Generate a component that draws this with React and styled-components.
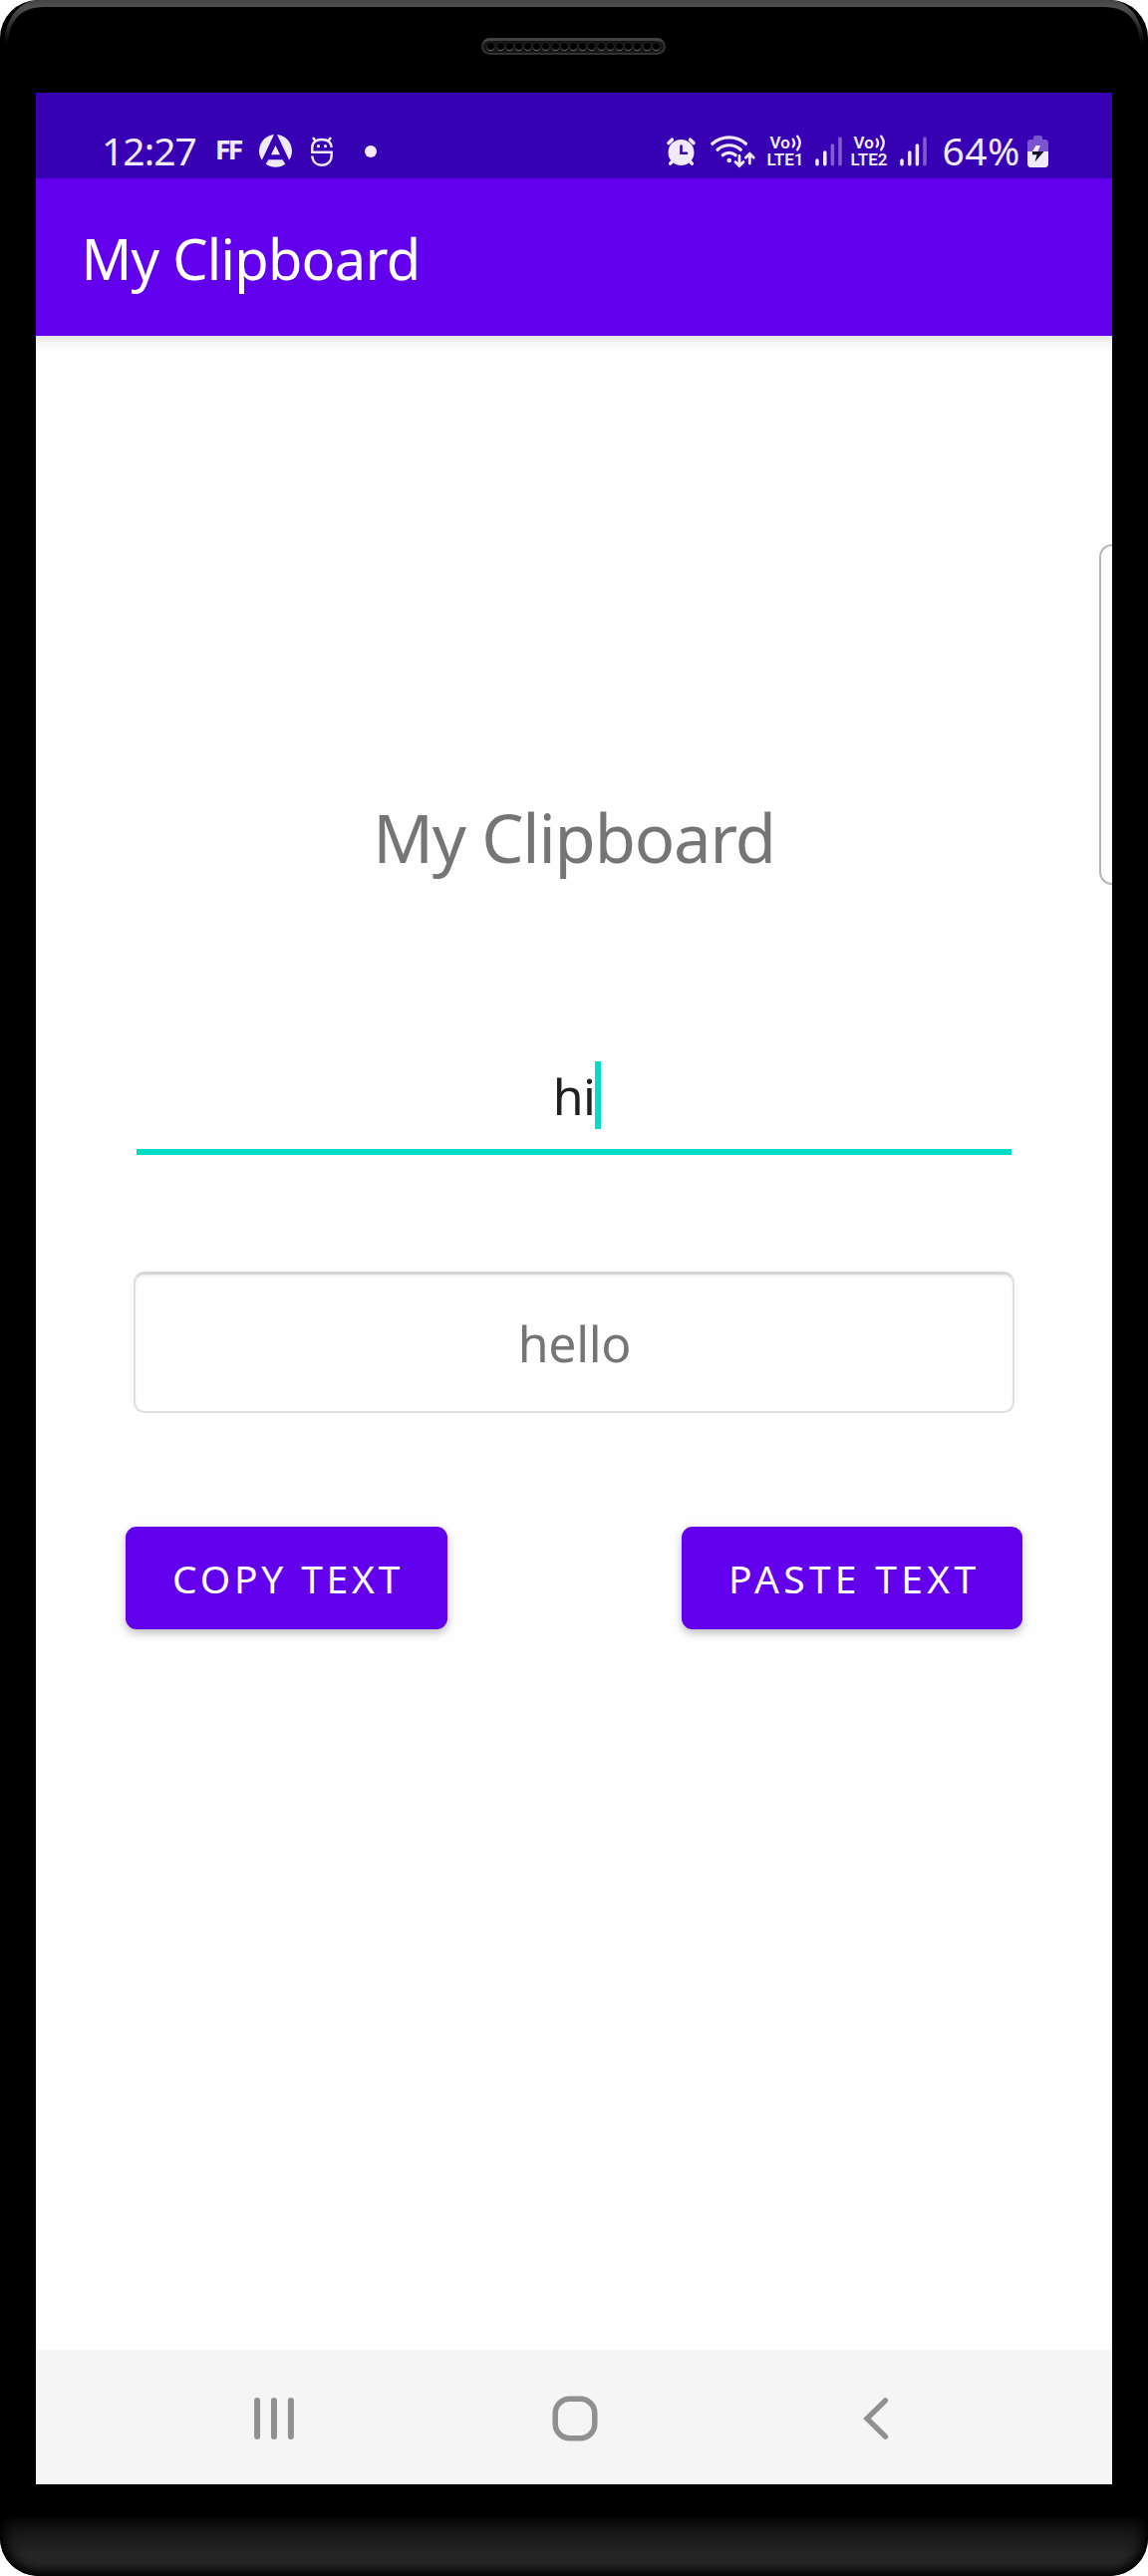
import React from "react";
import styled, { createGlobalStyle } from "styled-components";

const GlobalStyle = createGlobalStyle`
  * { box-sizing: border-box; }
  body { margin: 0; background: #fff; }
`;

const Phone = styled.div`
  position: relative;
  width: 1152px;
  height: 2585px;
  display: flex;
  flex-direction: column;
  align-items: center;
  overflow: hidden;
  border-radius: 38px;
  background: #000;
  font-family: "Noto Sans", "Open Sans", sans-serif;
`;

const TopBezel = styled.div`
  width: 100%;
  height: 93px;
  flex: none;
  display: flex;
  justify-content: center;
  padding: 38px 1px 0 0;
`;

const TopRim = styled.svg`
  position: absolute;
  top: 0;
  left: 0;
  width: 1152px;
  height: 46px;
`;

const Speaker = styled.div`
  width: 185px;
  height: 17px;
  display: flex;
  align-items: center;
  justify-content: center;
  gap: 2.2px;
  border-radius: 9px;
  border: 2px solid #333;
  border-top: 3px solid #424242;
  background: #151515;
`;

const Hole = styled.span`
  width: 7px;
  height: 8px;
  flex: none;
  border-radius: 50%;
  background: #000;
  border-bottom: 1px solid #666;
  box-shadow: 0 0 0 0.5px #333;
`;

const Screen = styled.div`
  position: relative;
  width: 1080px;
  height: 2400px;
  flex: none;
  display: flex;
  flex-direction: column;
  background: #fefefe;
  overflow: hidden;
`;

const StatusBar = styled.div`
  height: 86px;
  flex: none;
  display: flex;
  align-items: center;
  justify-content: space-between;
  padding: 31px 64px 0 66px;
  background: #3700b3;
  color: #f0eafa;
`;

const StatusGroup = styled.div`
  display: flex;
  align-items: center;
`;

const StatusText = styled.span`
  margin-left: ${(p) => p.$gap || 0}px;
  padding-bottom: 1px;
  font-size: 39px;
  line-height: 50px;
  letter-spacing: ${(p) => p.$track || 0}px;
`;

const Glyph = styled.svg`
  display: block;
  flex: none;
  overflow: visible;
  margin-left: ${(p) => p.$gap}px;
`;

const GameBadge = styled.span`
  margin-left: ${(p) => p.$gap}px;
  width: 26px;
  font: 900 25px/30px Roboto, sans-serif;
  letter-spacing: -0.8px;
`;

const Dot = styled.span`
  width: 12px;
  height: 12px;
  margin-left: ${(p) => p.$gap}px;
  border-radius: 50%;
  background: currentColor;
`;

const Carrier = styled.span`
  display: flex;
  flex-direction: column;
  width: 40px;
  margin-left: ${(p) => p.$gap}px;
  font: 600 17px/17px Roboto, sans-serif;
`;

const VoRow = styled.span`
  display: flex;
  align-items: center;
  padding-left: 3px;
`;

const AppBar = styled.header`
  height: 158px;
  flex: none;
  display: flex;
  align-items: center;
  padding: 1px 0 0 45.5px;
  background: #6200ee;
  color: #fff;
  font-size: 56px;
  letter-spacing: -0.75px;
`;

const Content = styled.main`
  flex: 1;
  display: flex;
  flex-direction: column;
  align-items: center;
  background: linear-gradient(#e4e4e4, #f6f6f6 7px, #fefefe 15px);
`;

const Heading = styled.h1`
  margin: 463px 0 0;
  font-size: 67px;
  line-height: 80px;
  font-weight: 400;
  letter-spacing: -1.15px;
  color: #757575;
`;

const TextField = styled.div`
  width: 878px;
  height: 94px;
  margin-top: 185px;
  display: flex;
  justify-content: center;
  border-bottom: 6px solid #05dcc8;
  font-size: 50px;
  line-height: 70px;
  letter-spacing: -0.6px;
  color: #212121;
`;

const Caret = styled.span`
  width: 6px;
  height: 68px;
  margin-right: -6px;
  background: #05dcc8;
`;

const ClipBox = styled.div`
  width: 884px;
  height: 142px;
  margin-top: 117px;
  display: flex;
  align-items: center;
  justify-content: center;
  padding-left: 1px;
  border: 2px solid #e0e0e0;
  border-top: 3px solid #d6d6d6;
  border-radius: 11px;
  box-shadow: inset 0 2px 2px #f1f1f1;
  font-size: 50px;
  letter-spacing: -0.3px;
  color: #757575;
`;

const Actions = styled.div`
  width: 900px;
  margin-top: 114px;
  display: flex;
  justify-content: space-between;
`;

const Button = styled.button`
  width: ${(p) => p.$width}px;
  height: 103px;
  padding: 0 0 0 47px;
  border: 0;
  border-radius: 11px;
  background: #6200ee;
  box-shadow: 0 4px 8px rgba(0, 0, 0, 0.25);
  color: #fff;
  font: 400 39px "Noto Sans", sans-serif;
  letter-spacing: ${(p) => p.$track}px;
  text-align: left;
  white-space: nowrap;
`;

/* Edge panel handle that overlaps the right side of the screen. */
const EdgeHandle = styled.div`
  position: absolute;
  right: 0;
  top: 453px;
  width: 13px;
  height: 342px;
  border: 2.5px solid #b4b6b5;
  border-right: 0;
  border-radius: 13px 0 0 13px;
`;

const NavBar = styled.nav`
  height: 135px;
  flex: none;
  display: flex;
  align-items: center;
  padding: 3px 0 0 219px;
  background: #f5f5f5;
  color: #909090;
`;

const Chin = styled.div`
  width: 100%;
  height: 58px;
  margin-top: 34px;
  border-radius: 0 0 38px 38px;
  background: linear-gradient(#0b0b0b, #171717 28%, #262626 62%, #252525 100%);
  box-shadow: inset 0 -7px 12px -3px #000, inset 9px 0 14px -5px #000,
    inset -9px 0 14px -5px #000;
`;

function AlarmIcon() {
  return (
    <Glyph $gap={0} width="29" height="28" viewBox="0 0 29 28" fill="none" stroke="currentColor" strokeLinecap="round">
      <circle cx="14.5" cy="15" r="13" fill="currentColor" stroke="none" />
      <path d="M2 5.6 5.4 2.2M27 5.6 23.6 2.2" strokeWidth="3.6" />
      <path d="M6.5 23 3.6 26.2M22.5 23l2.9 3.2" strokeWidth="3.4" />
      <path d="M14.5 8.5V15.8H20" stroke="#3700b3" strokeWidth="2.6" />
    </Glyph>
  );
}

function WifiIcon() {
  return (
    <Glyph $gap={15} width="45" height="34" viewBox="0 0 45 34" fill="none" stroke="currentColor" strokeWidth="3.2" strokeLinecap="round">
      <path d="M1.8 9.3A25.5 25.5 0 0 1 35.5 9.3" />
      <path d="M7 15.2A17.5 17.5 0 0 1 30.3 15.2" />
      <path d="M12.2 20.8A9.7 9.7 0 0 1 25.2 20.8" />
      <circle cx="18.8" cy="26" r="2.3" fill="currentColor" stroke="none" />
      <path d="M29 21.5V31.2M25 27.6 29 31.6 33 27.6M39.3 29V19.5M35.3 23.2 39.3 19.2 43.3 23.2" strokeWidth="2.8" />
    </Glyph>
  );
}

function CarrierLabel({ gap, name }) {
  return (
    <Carrier $gap={gap}>
      <VoRow>
        Vo
        <Glyph $gap={1} width="11" height="17" viewBox="0 0 11 17" fill="none" stroke="currentColor" strokeWidth="2.4" strokeLinecap="round">
          <path d="M1.8 4.8Q4.3 8.5 1.8 12.2M6.2 1.8Q11.4 8.5 6.2 15.2" />
        </Glyph>
      </VoRow>
      <span>{name}</span>
    </Carrier>
  );
}

const bars = [
  { x: 2, y: 24 },
  { x: 9.8, y: 16 },
  { x: 17.4, y: 9 },
  { x: 25, y: 2 },
];

function Signal({ gap, level }) {
  return (
    <Glyph $gap={gap} width="27" height="30" viewBox="0 0 27 30" stroke="currentColor" strokeWidth="3.5" strokeLinecap="round">
      {bars.map((b, i) => (
        <path key={b.x} d={`M${b.x} ${b.y}V27.8`} opacity={i < level ? 1 : 0.4} />
      ))}
    </Glyph>
  );
}

function BatteryIcon() {
  return (
    <Glyph $gap={7} width="21" height="32" viewBox="0 0 21 32">
      <path d="M6 2Q6 0 8 0H13Q15 0 15 2V4H18Q21 4 21 7.5V16H0V7.5Q0 4 3 4H6Z" fill="#7c54cd" />
      <path d="M0 16H21V28Q21 32 17.5 32H3.5Q0 32 0 28Z" fill="currentColor" />
      <path d="M8.5 10H13L10.5 16H5Z" fill="currentColor" />
      <path d="M5 16H16.5L7.5 26.5 9.5 19.2H5Z" fill="#17142a" />
    </Glyph>
  );
}

function StudioIcon() {
  return (
    <Glyph $gap={17} width="33" height="33" viewBox="0 0 33 33">
      <circle cx="16.5" cy="16.5" r="16.5" fill="currentColor" />
      <path d="M15 0H18L30.8 27 26 34H7L2.2 27Z" fill="#3700b3" />
      <path d="M16.5 11 21 20.3H12ZM9.5 25.3H23.5L26.3 29.5A16.5 16.5 0 0 1 6.7 29.5Z" fill="currentColor" />
    </Glyph>
  );
}

function RobotIcon() {
  return (
    <Glyph $gap={19} width="22" height="30" viewBox="0 0 22 30" fill="none" stroke="currentColor" strokeWidth="2.4">
      <path d="M2 1 5 5M20 1 17 5M20.7 10.8C20.2 5.5 16.5 3 11 3S1.3 5.5 1.3 10.8V15.8H20.7V19C20.7 25 16.5 28.7 11 28.7 6 28.7 1.8 25.8 1.3 19.5" />
      <circle cx="7.5" cy="9.7" r="1.6" fill="currentColor" stroke="none" />
      <circle cx="14.5" cy="9.7" r="1.6" fill="currentColor" stroke="none" />
    </Glyph>
  );
}

export default function App() {
  return (
    <>
      <GlobalStyle />
      <Phone>
        <TopRim viewBox="0 0 1152 46">
          <defs>
            <linearGradient id="rim" x1="0" y1="0" x2="0" y2="46" gradientUnits="userSpaceOnUse">
              <stop offset="0" stopColor="#444" />
              <stop offset="0.16" stopColor="#4f4f4f" />
              <stop offset="0.5" stopColor="#333" />
              <stop offset="0.95" stopColor="#000" />
            </linearGradient>
          </defs>
          <path fill="url(#rim)" d="M4 46C4 20 20 0 38 0H1114C1132 0 1148 20 1148 46H1144C1144 22 1132 7 1108 7H44C20 7 8 22 8 46Z" />
        </TopRim>
        <TopBezel>
          <Speaker>
            {Array.from({ length: 19 }, (_, i) => (
              <Hole key={i} />
            ))}
          </Speaker>
        </TopBezel>
        <Screen>
          <StatusBar>
            <StatusGroup>
              <StatusText $track={-0.95}>12:27</StatusText>
              <GameBadge $gap={20}>FF</GameBadge>
              <StudioIcon />
              <RobotIcon />
              <Dot $gap={32} />
            </StatusGroup>
            <StatusGroup>
              <AlarmIcon />
              <WifiIcon />
              <CarrierLabel gap={11} name="LTE1" />
              <Signal gap={9} level={2} />
              <CarrierLabel gap={8} name="LTE2" />
              <Signal gap={10} level={3} />
              <StatusText $gap={15} $track={0.5}>64%</StatusText>
              <BatteryIcon />
            </StatusGroup>
          </StatusBar>
          <AppBar>My Clipboard</AppBar>
          <Content>
            <Heading>My Clipboard</Heading>
            <TextField>
              hi
              <Caret />
            </TextField>
            <ClipBox>hello</ClipBox>
            <Actions>
              <Button $width={323} $track={3.8}>COPY TEXT</Button>
              <Button $width={342} $track={4.3}>PASTE TEXT</Button>
            </Actions>
          </Content>
          <NavBar>
            <Glyph $gap={0} width="40" height="42" viewBox="0 0 40 42" stroke="currentColor" strokeWidth="6" strokeLinecap="round">
              <path d="M3.1 3V39M20 3V39M36.9 3V39" />
            </Glyph>
            <Glyph $gap={259} width="46" height="46" viewBox="0 0 46 46" fill="none" stroke="currentColor" strokeWidth="5.5">
              <rect x="3.2" y="3.2" width="39.6" height="39.6" rx="14.5" />
            </Glyph>
            <Glyph $gap={266} width="26" height="42" viewBox="0 0 26 42" fill="none" stroke="currentColor" strokeWidth="5.4" strokeLinecap="round">
              <path d="M22.5 2.8 4 21 22.5 39.2" />
            </Glyph>
          </NavBar>
          <EdgeHandle />
        </Screen>
        <Chin />
      </Phone>
    </>
  );
}
